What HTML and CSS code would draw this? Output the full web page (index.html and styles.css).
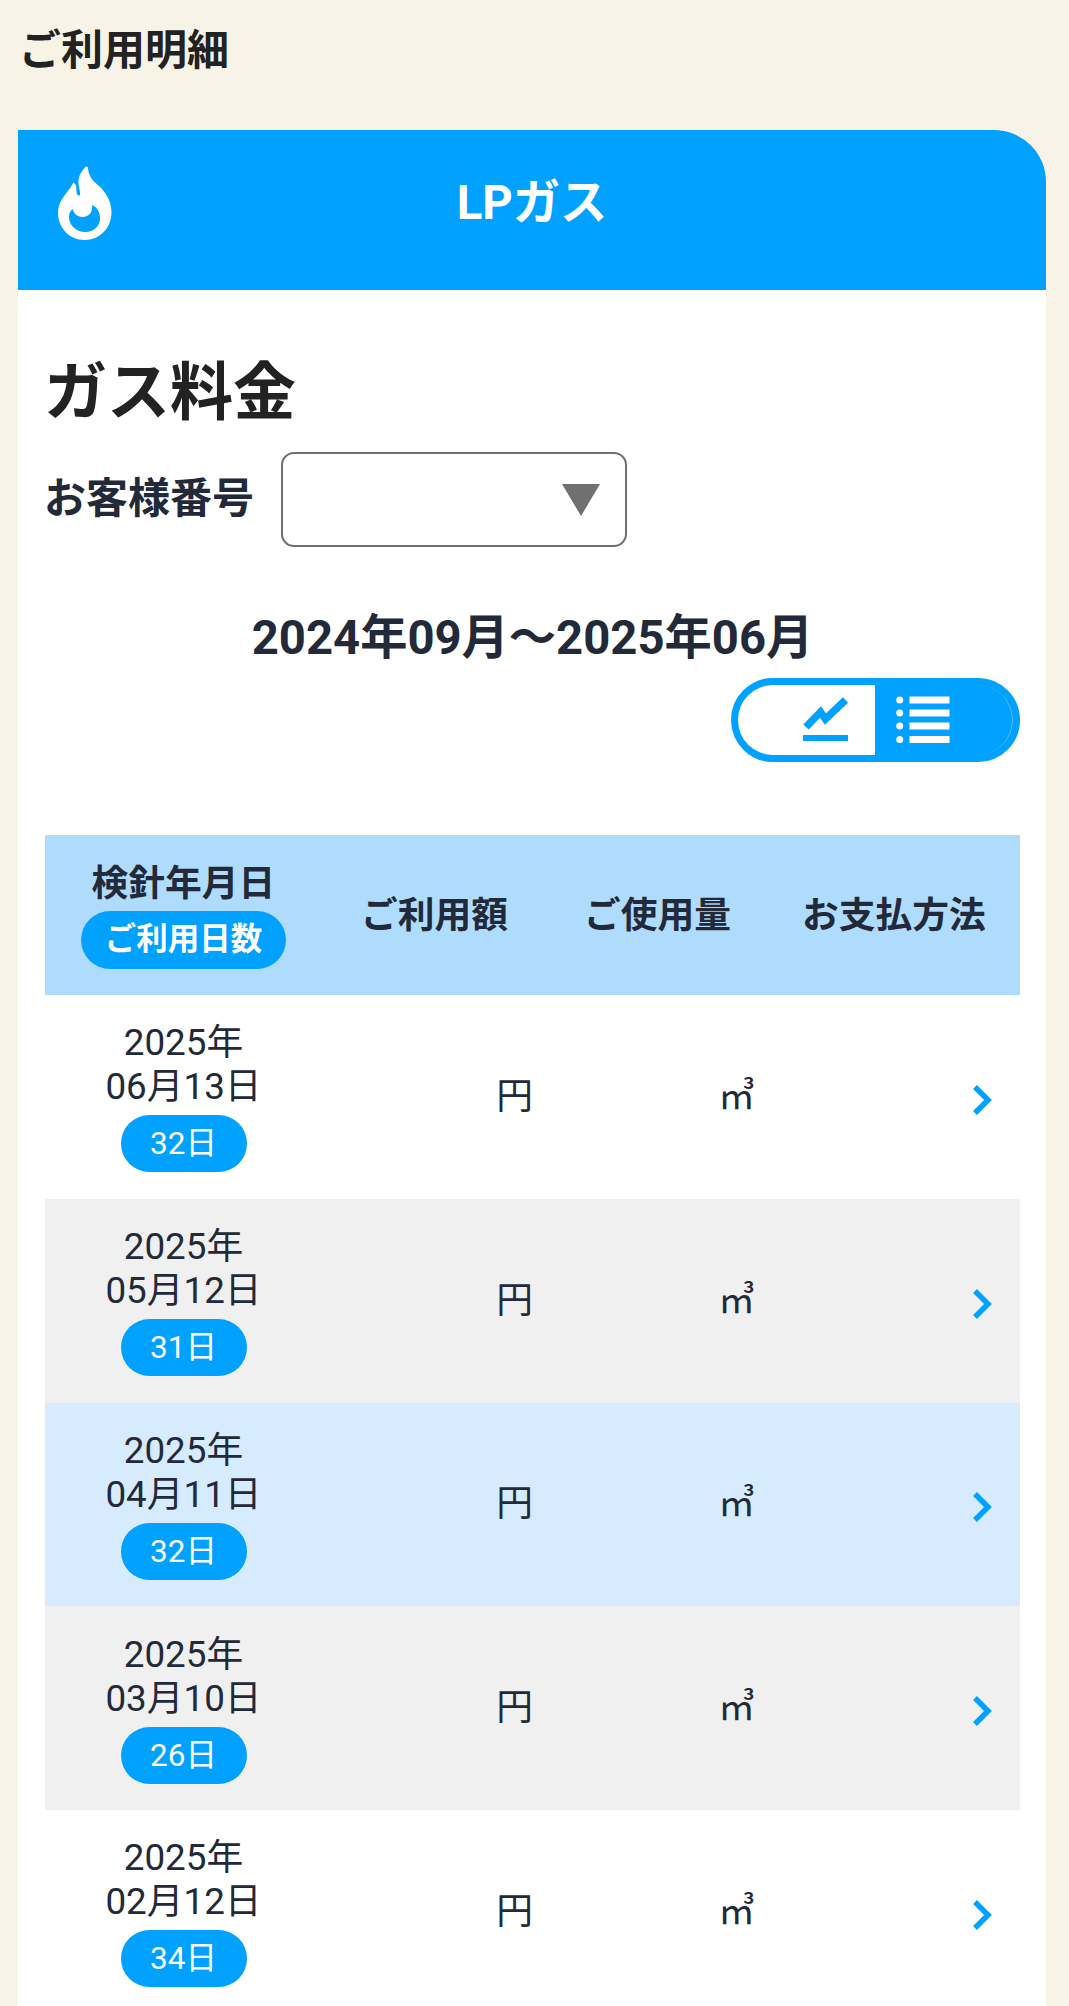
FILE: index.html
```html
<!DOCTYPE html>
<html lang="ja">
<head>
  <meta charset="UTF-8">
  <meta name="viewport" content="width=device-width, initial-scale=1.0">
  <title>ご利用明細</title>
  <link rel="stylesheet" href="styles.css">
</head>
<body>

<h1 class="page-title">ご利用明細</h1>

<div class="card">
  <div class="card-header">
    <!-- 炎アイコン -->
    <svg class="flame" viewBox="0 0 54 75" width="54" height="75">
      <path fill="#fff" fill-rule="evenodd" d="M28 .5C23 5 20 11 20.500 18C21 22 22.500 26 22 29C20 30 19 29 18.500 26L18 19L15.500 16.500C12 23 7 28 3.500 34C.5 39 0 43 0 48C1 63 12 74 26.500 74C42 74 53.500 62 53.500 46C53.500 35 47 25 41 20C35 15 30 10 30 1ZM14.500 43C16 48 20 51 24.500 51C31 51 35 46 34 39C39 41 42 46 42 52C42 60 36 66 27 66C18 66 11 59 11 51C11 48 12 45 14.500 43Z"/>
    </svg>
    <h2 class="card-title">LPガス</h2>
  </div>

  <div class="card-body">
    <h3 class="fee-title">ガス料金</h3>
    <div class="customer">
      <span class="customer-label">お客様番号</span>
      <div class="select">
        <span class="select-arrow"></span>
      </div>
    </div>

    <p class="period">2024年09月〜2025年06月</p>

    <!-- グラフ / 一覧の切り替え -->
    <div class="toggle">
      <div class="toggle-graph">
        <svg viewBox="0 0 46 46" width="46" height="46">
          <path d="M3 31L17.500 16L22.500 23L42.500 4" fill="none" stroke="#00a1ff" stroke-width="7.500"/>
          <path d="M0 39H45V45H0Z" fill="#00a1ff"/>
        </svg>
      </div>
      <div class="toggle-list">
        <svg viewBox="0 0 54 48" width="54" height="48" fill="#fff">
          <circle cx="3.700" cy="4" r="3.500"/><path d="M13.500 .5h40v7h-40z"/>
          <circle cx="3.700" cy="17" r="3.500"/><path d="M13.500 13.500h40v7h-40z"/>
          <circle cx="3.700" cy="30" r="3.500"/><path d="M13.500 26.500h40v7h-40z"/>
          <circle cx="3.700" cy="43.500" r="3.500"/><path d="M13.500 40h40v7h-40z"/>
        </svg>
      </div>
    </div>

    <div class="table">
      <div class="row head">
        <div class="date">検針年月日<span class="days">ご利用日数</span></div>
        <div class="label">ご利用額</div>
        <div class="label">ご使用量</div>
        <div class="label label-pay">お支払方法</div>
      </div>
      <div class="row">
        <div class="date">2025年<br>06月13日<span class="days">32日</span></div>
        <div class="amount">円</div>
        <div class="usage">㎥</div>
        <div class="pay"><svg class="chevron" viewBox="0 0 19 30" width="19" height="30"><path d="M2 2L15 15L2 28"/></svg></div>
      </div>
      <div class="row gray">
        <div class="date">2025年<br>05月12日<span class="days">31日</span></div>
        <div class="amount">円</div>
        <div class="usage">㎥</div>
        <div class="pay"><svg class="chevron" viewBox="0 0 19 30" width="19" height="30"><path d="M2 2L15 15L2 28"/></svg></div>
      </div>
      <div class="row blue">
        <div class="date">2025年<br>04月11日<span class="days">32日</span></div>
        <div class="amount">円</div>
        <div class="usage">㎥</div>
        <div class="pay"><svg class="chevron" viewBox="0 0 19 30" width="19" height="30"><path d="M2 2L15 15L2 28"/></svg></div>
      </div>
      <div class="row gray">
        <div class="date">2025年<br>03月10日<span class="days">26日</span></div>
        <div class="amount">円</div>
        <div class="usage">㎥</div>
        <div class="pay"><svg class="chevron" viewBox="0 0 19 30" width="19" height="30"><path d="M2 2L15 15L2 28"/></svg></div>
      </div>
      <div class="row">
        <div class="date">2025年<br>02月12日<span class="days">34日</span></div>
        <div class="amount">円</div>
        <div class="usage">㎥</div>
        <div class="pay"><svg class="chevron" viewBox="0 0 19 30" width="19" height="30"><path d="M2 2L15 15L2 28"/></svg></div>
      </div>
    </div>
  </div>
</div>

</body>
</html>
```
FILE: styles.css
```css
* {
  box-sizing: border-box;
}
body {
  margin: 0;
  height: 2006px;
  overflow: hidden;
  background-color: #f8f3e7;
  color: #222938;
  font-family: Roboto, "Noto Sans CJK JP", sans-serif;
  font-size: 36.75px;
}
h1, h2, h3, p {
  margin: 0;
}
.page-title {
  height: 130px;
  padding: 21px 0 0 19px;
  font-size: 42px;
  line-height: 60px;
  color: #222;
}
/* カード */
.card {
  width: 1028px;
  margin-left: 18px;
  background-color: #fff;
  border-top-right-radius: 52px;
}
.card-header {
  display: grid;
  grid-template-columns: 54px 1fr 54px;
  height: 160px;
  padding: 36px 40px 0;
  background-color: #00a1ff;
  border-top-right-radius: 52px;
}
.card-title {
  padding-top: 1px;
  color: #fff;
  font-size: 47.25px;
  line-height: 72px;
  text-align: center;
}
.card-body {
  padding: 58px 26px 0 27px;
}
.fee-title {
  margin-left: -1px;
  font-size: 63px;
  line-height: 90px;
  color: #222;
}
/* お客様番号 */
.customer {
  display: flex;
  align-items: center;
  gap: 27px;
  margin: 14px 0 0 -1px;
}
.customer-label {
  width: 210px;
  padding-bottom: 2px;
  font-size: 42px;
  font-weight: bold;
  line-height: 60px;
}
.select {
  display: flex;
  align-items: center;
  justify-content: flex-end;
  width: 346px;
  height: 95px;
  padding-right: 25px;
  border: 2px solid #6f6f6f;
  border-radius: 13px;
}
.select-arrow {
  border: 19px solid transparent;
  border-top: 32px solid #707070;
  border-bottom: 0;
}
.period {
  margin-top: 56px;
  font-size: 47.25px;
  font-weight: bold;
  line-height: 70px;
  text-align: center;
}
/* 切り替えボタン */
.toggle {
  display: flex;
  width: 289px;
  height: 84px;
  margin: 5px 0 0 auto;
  border: 7px solid #00a1ff;
  border-radius: 42px;
  background-color: #00a1ff;
}
.toggle-graph {
  width: 137px;
  padding: 11px 0 0 65px;
  background-color: #fff;
  border-radius: 35px 0 0 35px;
}
.toggle-list {
  flex: 1;
  padding: 11px 0 0 21px;
  border-right: 1px solid rgba(255, 255, 255, 0.3);
  border-radius: 0 35px 35px 0;
}
.toggle svg {
  display: block;
}
/* 明細テーブル */
.table {
  margin-top: 73px;
}
.row {
  display: grid;
  grid-template-columns: 277px 228px 218px 252px;
  align-items: center;
  height: 203.75px;
  text-align: center;
}
.head {
  height: 160px;
  background-color: #afdcfc;
  font-weight: bold;
}
.gray {
  background-color: #f0f0f0;
}
.blue {
  background-color: #d6ecfe;
}
.date {
  line-height: 44px;
}
.label {
  padding: 0 3px 7px 0;
}
.label-pay {
  padding-right: 0;
}
.days {
  display: block;
  width: 126px;
  height: 57px;
  margin: 6px auto 0;
  border-radius: 29px;
  background-color: #00a1ff;
  color: #fff;
  font-size: 31.5px;
  line-height: 57px;
}
.head .days {
  width: 205px;
  height: 58px;
  margin-top: 5px;
}
.head .date {
  padding-top: 1px;
}
.amount {
  text-align: right;
  padding: 0 17px 8px 0;
}
.usage {
  text-align: right;
  padding: 0 13px 8px 0;
}
.pay {
  padding: 6px 28px 0 0;
}
.chevron {
  display: block;
  margin-left: auto;
  fill: none;
  stroke: #00a1ff;
  stroke-width: 5.500;
}
```
